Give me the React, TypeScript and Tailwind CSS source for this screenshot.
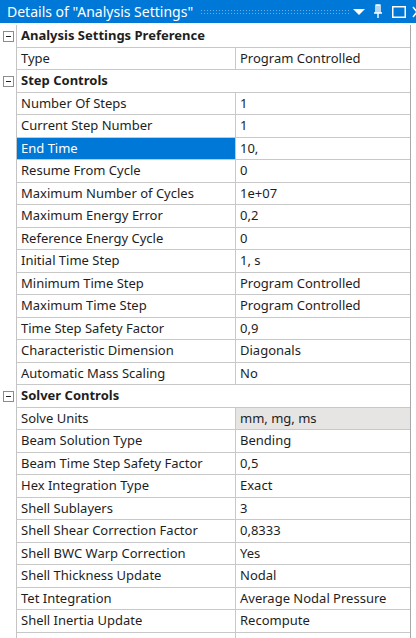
import React from "react";

type Row =
  | { kind: "group"; label: string }
  | { kind: "item"; label: string; value: string; selected?: boolean; readonly?: boolean };

const rows: Row[] = [
  { kind: "group", label: "Analysis Settings Preference" },
  { kind: "item", label: "Type", value: "Program Controlled" },
  { kind: "group", label: "Step Controls" },
  { kind: "item", label: "Number Of Steps", value: "1" },
  { kind: "item", label: "Current Step Number", value: "1" },
  { kind: "item", label: "End Time", value: "10,", selected: true },
  { kind: "item", label: "Resume From Cycle", value: "0" },
  { kind: "item", label: "Maximum Number of Cycles", value: "1e+07" },
  { kind: "item", label: "Maximum Energy Error", value: "0,2" },
  { kind: "item", label: "Reference Energy Cycle", value: "0" },
  { kind: "item", label: "Initial Time Step", value: "1, s" },
  { kind: "item", label: "Minimum Time Step", value: "Program Controlled" },
  { kind: "item", label: "Maximum Time Step", value: "Program Controlled" },
  { kind: "item", label: "Time Step Safety Factor", value: "0,9" },
  { kind: "item", label: "Characteristic Dimension", value: "Diagonals" },
  { kind: "item", label: "Automatic Mass Scaling", value: "No" },
  { kind: "group", label: "Solver Controls" },
  { kind: "item", label: "Solve Units", value: "mm, mg, ms", readonly: true },
  { kind: "item", label: "Beam Solution Type", value: "Bending" },
  { kind: "item", label: "Beam Time Step Safety Factor", value: "0,5" },
  { kind: "item", label: "Hex Integration Type", value: "Exact" },
  { kind: "item", label: "Shell Sublayers", value: "3" },
  { kind: "item", label: "Shell Shear Correction Factor", value: "0,8333" },
  { kind: "item", label: "Shell BWC Warp Correction", value: "Yes" },
  { kind: "item", label: "Shell Thickness Update", value: "Nodal" },
  { kind: "item", label: "Tet Integration", value: "Average Nodal Pressure" },
  { kind: "item", label: "Shell Inertia Update", value: "Recompute" },
  { kind: "item", label: "", value: "" },
];

function MinusBox() {
  return (
    <div className="w-[11px] h-[11px] border border-[#8c8c8c] bg-white flex items-center justify-center">
      <div className="w-[5px] h-px bg-[#222]" />
    </div>
  );
}

export default function App() {
  return (
    <div
      className="w-[416px] h-[638px] overflow-hidden bg-white text-[13px] text-[#1e1e1e]"
      style={{ fontFamily: '"Noto Sans", "Open Sans", sans-serif' }}
    >
      {/* Title bar */}
      <div className="h-[23px] bg-[#0078d7] flex items-center text-white pl-[7px] overflow-hidden">
        <span className="w-[186px] shrink-0 text-[14px] leading-none whitespace-nowrap">
          Details of "Analysis Settings"
        </span>
        <div
          className="ml-[7px] w-[150px] shrink-0 h-[6px] opacity-50"
          style={{
            backgroundImage: "radial-gradient(circle, #cfe6fa 0.6px, transparent 0.8px)",
            backgroundSize: "3px 3px",
          }}
        />
        <svg width="12" height="6" viewBox="0 0 12 6" className="ml-[3px] mt-[1px] shrink-0">
          <path d="M0 0H12L6 6Z" fill="white" />
        </svg>
        <svg width="10" height="15" viewBox="0 0 10 15" className="ml-[8px] shrink-0">
          <path d="M2.5 1H7.5M3 1V9M7 1V9M5 1V9M1 9H9M5 9V14" stroke="white" strokeWidth="1.4" fill="none" />
        </svg>
        <svg width="14" height="12" viewBox="0 0 14 12" className="ml-[9px] shrink-0">
          <rect x="0.75" y="0.75" width="12.5" height="10.5" stroke="white" strokeWidth="1.5" fill="none" />
        </svg>
        <svg width="10" height="12" viewBox="0 0 10 12" className="ml-[6px] shrink-0">
          <path d="M1 1L9 11M9 1L1 11" stroke="white" strokeWidth="1.5" />
        </svg>
      </div>

      {/* Property grid */}
      <div className="flex mt-[2px]">
        <div className="w-[16px] shrink-0 flex flex-col">
          {rows.map((r, i) => (
            <div key={i} className="h-[22.5px] flex items-center pl-[3px]">
              {r.kind === "group" && <MinusBox />}
            </div>
          ))}
        </div>
        <div className="w-[395px] border-l border-r border-[#c4c4c4] border-r-[#a8a8a8]">
          {rows.map((r, i) =>
            r.kind === "group" ? (
              <div
                key={i}
                className="h-[22.5px] flex items-center border-b border-[#c8c8c8] pl-[4px] font-bold whitespace-nowrap"
              >
                {r.label}
              </div>
            ) : (
              <div key={i} className="h-[22.5px] flex border-b border-[#c8c8c8]">
                <div
                  className={`w-[219px] shrink-0 flex items-center pl-[4px] border-r border-[#c8c8c8] whitespace-nowrap ${
                    r.selected ? "bg-[#0078d7] text-white" : ""
                  }`}
                >
                  {r.label}
                </div>
                <div
                  className={`flex-1 flex items-center pl-[4px] whitespace-nowrap ${
                    r.readonly ? "bg-[#e6e5e3]" : ""
                  }`}
                >
                  {r.value}
                </div>
              </div>
            )
          )}
        </div>
      </div>
    </div>
  );
}
